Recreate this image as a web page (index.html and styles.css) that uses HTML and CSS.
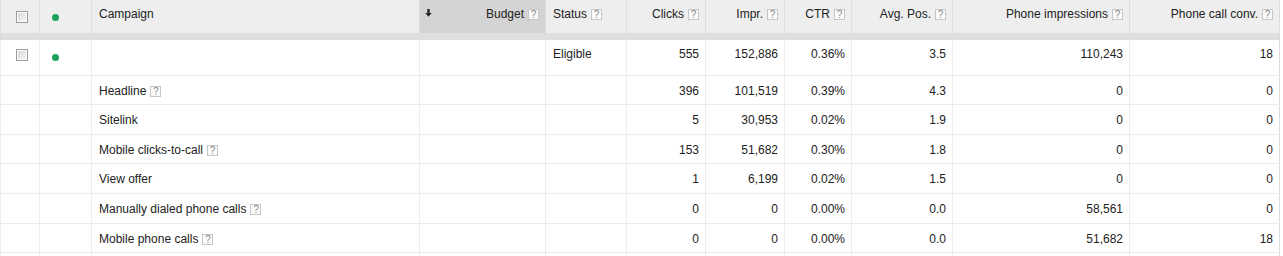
FILE: index.html
```html
<!DOCTYPE html>
<html>
<head>
<meta charset="utf-8">
<link rel="stylesheet" href="styles.css">
</head>
<body>
<table class="grid">
  <colgroup>
    <col class="c-check"><col class="c-dot"><col class="c-camp"><col class="c-budget"><col class="c-status"><col class="c-clicks"><col class="c-impr"><col class="c-ctr"><col class="c-pos"><col class="c-phimp"><col class="c-phconv">
  </colgroup>
  <thead>
    <tr class="head">
      <th class="cell-check"><span class="checkbox"></span></th>
      <th class="cell-dot"><span class="dot"></span></th>
      <th class="left">Campaign</th>
      <th class="sorted"><svg class="sort-arrow" width="7" height="8" viewBox="0 0 7 8"><path d="M2.3 0h2.4v4h2.1L3.5 7.8 0.2 4h2.1z" fill="#2a2a2a"/></svg>Budget<span class="help">?</span></th>
      <th class="left">Status<span class="help">?</span></th>
      <th>Clicks<span class="help">?</span></th>
      <th>Impr.<span class="help">?</span></th>
      <th>CTR<span class="help">?</span></th>
      <th>Avg. Pos.<span class="help">?</span></th>
      <th>Phone impressions<span class="help">?</span></th>
      <th>Phone call conv.<span class="help">?</span></th>
    </tr>
    <tr class="band"><td colspan="11"></td></tr>
  </thead>
  <tbody>
    <tr class="main">
      <td class="cell-check"><span class="checkbox"></span></td>
      <td class="cell-dot"><span class="dot"></span></td>
      <td class="left"></td>
      <td></td>
      <td class="left">Eligible</td>
      <td>555</td><td>152,886</td><td>0.36%</td><td>3.5</td><td>110,243</td><td>18</td>
    </tr>
    <tr class="sub">
      <td></td><td></td><td class="left">Headline<span class="help">?</span></td><td></td><td></td>
      <td>396</td><td>101,519</td><td>0.39%</td><td>4.3</td><td>0</td><td>0</td>
    </tr>
    <tr class="sub">
      <td></td><td></td><td class="left">Sitelink</td><td></td><td></td>
      <td>5</td><td>30,953</td><td>0.02%</td><td>1.9</td><td>0</td><td>0</td>
    </tr>
    <tr class="sub">
      <td></td><td></td><td class="left">Mobile clicks-to-call<span class="help">?</span></td><td></td><td></td>
      <td>153</td><td>51,682</td><td>0.30%</td><td>1.8</td><td>0</td><td>0</td>
    </tr>
    <tr class="sub">
      <td></td><td></td><td class="left">View offer</td><td></td><td></td>
      <td>1</td><td>6,199</td><td>0.02%</td><td>1.5</td><td>0</td><td>0</td>
    </tr>
    <tr class="sub">
      <td></td><td></td><td class="left">Manually dialed phone calls<span class="help">?</span></td><td></td><td></td>
      <td>0</td><td>0</td><td>0.00%</td><td>0.0</td><td>58,561</td><td>0</td>
    </tr>
    <tr class="sub">
      <td></td><td></td><td class="left">Mobile phone calls<span class="help">?</span></td><td></td><td></td>
      <td>0</td><td>0</td><td>0.00%</td><td>0.0</td><td>51,682</td><td>18</td>
    </tr>
    <tr class="sub">
      <td></td><td></td><td class="left"></td><td></td><td></td>
      <td></td><td></td><td></td><td></td><td></td><td></td>
    </tr>
  </tbody>
</table>
</body>
</html>
```
FILE: styles.css
```css
html, body {
  margin: 0;
  padding: 0;
  background: #fff;
}
body {
  font-family: "Liberation Sans", Arial, sans-serif;
  font-size: 12px;
  color: #222;
}
.grid {
  border-collapse: collapse;
  table-layout: fixed;
  width: 1280px;
  border-left: 1px solid #dcdcdc;
  border-right: 1px solid #dcdcdc;
}
.c-check { width: 39px; }
.c-dot { width: 52px; }
.c-camp { width: 328px; }
.c-budget { width: 126px; }
.c-status { width: 81px; }
.c-clicks { width: 79px; }
.c-impr { width: 79px; }
.c-ctr { width: 67px; }
.c-pos { width: 101px; }
.c-phimp { width: 177px; }
.c-phconv { width: 150px; }

th, td {
  text-align: right;
  vertical-align: top;
  line-height: 14px;
  padding: 7px 6px 0 6px;
  white-space: nowrap;
  overflow: hidden;
}
tr.head {
  height: 33px;
}
th {
  background: #eeeeee;
  font-weight: normal;
  border-left: 1px solid #dddddd;
  color: #222;
}
th.sorted {
  background: #d4d4d4;
}
tr.band {
  height: 7px;
}
tr.band td {
  padding: 0;
  height: 7px;
  background: #dfdfdf;
  border: 0;
}
td {
  border-left: 1px solid #ececec;
  border-bottom: 1px solid #ececec;
}
.left {
  text-align: left;
  padding-left: 7px;
}
tr.main {
  height: 35px;
}
tr.sub {
  height: 29.67px;
}
tr.sub td {
  padding-top: 8px;
}
th.cell-check, td.cell-check {
  text-align: left;
  padding: 11px 0 0 15px;
}
tr.main td.cell-check {
  padding-top: 9px;
}
th.cell-dot, td.cell-dot {
  text-align: left;
  padding: 14px 0 0 12px;
}
.checkbox {
  display: block;
  width: 10px;
  height: 10px;
  border: 1px solid #9c9c9c;
  box-shadow: inset 0 0 0 1px #fbfbfb;
  background: linear-gradient(135deg, #d6d6d6 0%, #f6f6f6 100%);
}
.dot {
  display: block;
  width: 7px;
  height: 7px;
  border-radius: 50%;
  background: #1aa35a;
}
.sort-arrow {
  float: left;
  margin: 2px 0 0 -1px;
}
.help {
  display: inline-block;
  box-sizing: border-box;
  width: 11px;
  height: 11px;
  margin-left: 4px;
  border: 1px solid #c6c6c6;
  background: #fbfbfb;
  color: #8a8a8a;
  font-size: 10px;
  line-height: 10px;
  text-align: center;
  vertical-align: 0;
}
```
